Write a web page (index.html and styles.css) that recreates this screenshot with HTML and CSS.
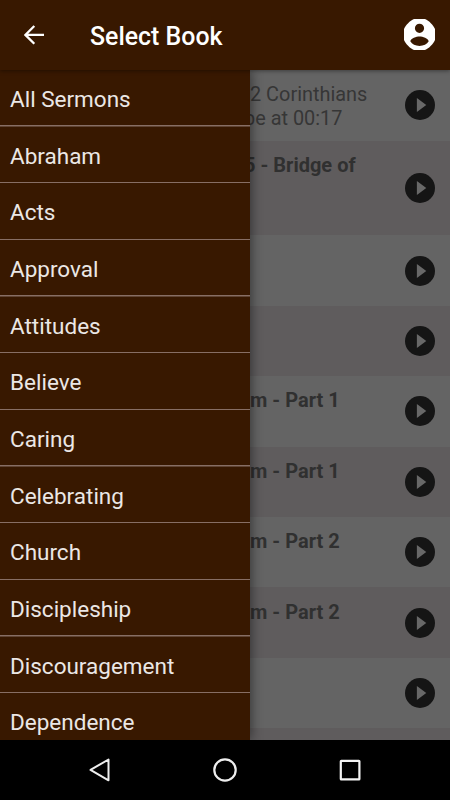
FILE: index.html
```
<!DOCTYPE html>
<html lang="en">
<head>
<meta charset="utf-8">
<title>Select Book</title>
<link rel="stylesheet" href="styles.css">
</head>
<body>
<svg width="0" height="0" class="defs">
  <symbol id="play" viewBox="0 0 30 30"><circle cx="15" cy="15" r="15" fill="#151515"/><path d="M11.900 8v14L21.300 15z" fill="#686868"/></symbol>
</svg>
<div class="screen">
  <header class="bar">
    <svg class="back" viewBox="0 0 20 20"><path d="M20 9.900H1.400M10.300 1 1.400 9.900l8.900 8.900" fill="none" stroke="#fff" stroke-width="2.300"/></svg>
    <h1 class="title">Select Book</h1>
    <svg class="account" viewBox="0 0 31 31"><path fill="#fff" fill-rule="evenodd" d="M10 0h11C25 1.700 29.300 6 31 10v11c-1.700 4-6 8.300-10 10H10C6 29.300 1.700 25 0 21V10C1.700 6 6 1.700 10 0zM15.500 4.700a4.600 4.600 0 1 0 0 9.200 4.600 4.600 0 1 0 0-9.200zM6.300 22.300C8 25.300 11.500 26.900 15.500 26.900s7.500-1.600 9.200-4.600c-.5-3-6-4.700-9.200-4.700s-8.700 1.700-9.200 4.700z"/></svg>
  </header>
  <main class="body">
    <nav class="drawer">
      <a class="book">All Sermons</a>
      <a class="book">Abraham</a>
      <a class="book">Acts</a>
      <a class="book">Approval</a>
      <a class="book">Attitudes</a>
      <a class="book">Believe</a>
      <a class="book">Caring</a>
      <a class="book">Celebrating</a>
      <a class="book">Church</a>
      <a class="book">Discipleship</a>
      <a class="book">Discouragement</a>
      <a class="book">Dependence</a>
    </nav>
    <section class="sermons">
      <div class="row intro"><p class="text">2 Corinthians<br><span class="cut">be at 00:17</span></p><svg class="play"><use href="#play"/></svg></div>
      <div class="row tall"><p class="text"><span class="cut">5 - Bridge of</span></p><svg class="play"><use href="#play"/></svg></div>
      <div class="row"><p class="text"></p><svg class="play"><use href="#play"/></svg></div>
      <div class="row"><p class="text"></p><svg class="play"><use href="#play"/></svg></div>
      <div class="row"><p class="text">m - Part 1</p><svg class="play"><use href="#play"/></svg></div>
      <div class="row"><p class="text">m - Part 1</p><svg class="play"><use href="#play"/></svg></div>
      <div class="row"><p class="text">m - Part 2</p><svg class="play"><use href="#play"/></svg></div>
      <div class="row"><p class="text">m - Part 2</p><svg class="play"><use href="#play"/></svg></div>
      <div class="row"><p class="text"></p><svg class="play"><use href="#play"/></svg></div>
      <div class="row"></div>
    </section>
  </main>
  <footer class="navbar">
    <svg viewBox="0 0 26 26"><path d="M21.500 2.500v20.800L3.500 12.900z" fill="none" stroke="#eee" stroke-width="2" stroke-linejoin="round"/></svg>
    <svg viewBox="0 0 26 26"><circle cx="13" cy="13" r="10.700" fill="none" stroke="#eee" stroke-width="2.200"/></svg>
    <svg viewBox="0 0 26 26"><rect x="3.800" y="3.800" width="18.600" height="18.600" rx=".5" fill="none" stroke="#f4f4f4" stroke-width="2.200"/></svg>
  </footer>
</div>
</body>
</html>
```
FILE: styles.css
```
body {
  margin: 0;
  font-family: Roboto, sans-serif;
}

.defs {
  display: block;
}

.screen {
  display: flex;
  flex-direction: column;
  height: 800px;
  overflow: hidden;
  background: #000;
}

.bar {
  display: flex;
  align-items: center;
  flex: 0 0 70px;
  box-sizing: border-box;
  padding: 0 15px 1px 24px;
  background: #381800;
  box-shadow: 0 1px 4px rgba(0, 0, 0, .4);
  z-index: 2;
}

.back {
  width: 20px;
  height: 20px;
}

.title {
  flex: 1;
  margin: 4px 0 0 46px;
  color: #fff;
  font-size: 24.900px;
  font-weight: 500;
  line-height: 30px;
}

.account {
  width: 31px;
  height: 31px;
}

.body {
  display: grid;
  grid-template-columns: 250px 200px;
  flex: 0 0 670px;
  overflow: hidden;
}

.drawer {
  height: 670px;
  background: #381800;
  box-shadow: 1px 0 11px rgba(0, 0, 0, .48);
  z-index: 1;
}

.book {
  display: flex;
  align-items: center;
  box-sizing: border-box;
  height: 56.680px;
  padding: 1px 10px 0;
  background: linear-gradient(#876e64, #876e64) 0 100% / 100% 1.500px no-repeat;
  color: #ebe7e5;
  font-size: 22.500px;
}

.sermons {
  height: 670px;
  overflow: hidden;
}

.row {
  display: flex;
  align-items: center;
  justify-content: space-between;
  box-sizing: border-box;
  height: 70.400px;
  padding-right: 15px;
  background: #646464;
  color: #303030;
  font-size: 20px;
  font-weight: 700;
  line-height: 24px;
}

.row:nth-child(even) {
  background: #5f5c5d;
}

.intro {
  height: 70.900px;
  color: #363636;
  font-size: 19.900px;
  font-weight: 400;
}

.tall {
  height: 94.500px;
}

.text {
  align-self: flex-start;
  margin: 12.300px 0 0;
  white-space: nowrap;
}

.intro .text {
  margin-top: 13px;
}

.cut {
  margin-left: -6px;
}

.play {
  width: 30px;
  height: 30px;
}

.navbar {
  display: flex;
  align-items: center;
  justify-content: center;
  gap: 99px;
  flex: 0 0 60px;
}

.navbar svg {
  width: 26px;
  height: 26px;
}
```
